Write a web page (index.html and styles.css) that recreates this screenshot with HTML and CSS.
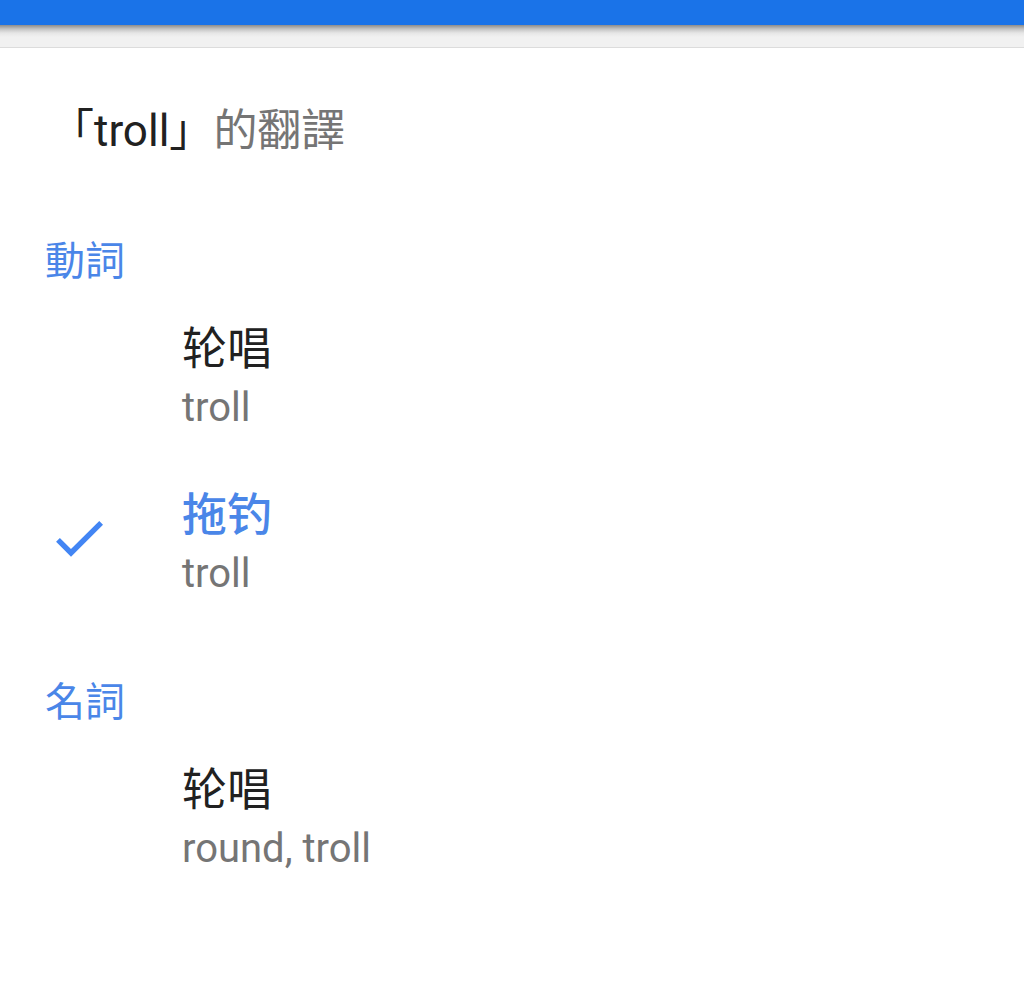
FILE: index.html
```html
<!DOCTYPE html>
<html lang="zh-TW">
<head>
<meta charset="utf-8">
<title>troll 的翻譯</title>
<link rel="stylesheet" href="styles.css">
</head>
<body>
<header class="toolbar"></header>
<div class="shade"></div>
<main class="sheet">
  <h1 class="title"><span class="term">「troll」</span>的翻譯</h1>
  <section class="group">
    <h2 class="pos">動詞</h2>
    <div class="item">
      <div class="mark"></div>
      <div class="texts">
        <div class="word" lang="zh-CN">轮唱</div>
        <div class="sub">troll</div>
      </div>
    </div>
    <div class="item selected">
      <div class="mark">
        <svg class="check" viewBox="0 0 24 24" width="64" height="64"><path d="M9 16.17L4.83 12l-1.42 1.41L9 19 21 7l-1.41-1.41z"/></svg>
      </div>
      <div class="texts">
        <div class="word" lang="zh-CN">拖钓</div>
        <div class="sub">troll</div>
      </div>
    </div>
  </section>
  <section class="group">
    <h2 class="pos">名詞</h2>
    <div class="item">
      <div class="mark"></div>
      <div class="texts">
        <div class="word" lang="zh-CN">轮唱</div>
        <div class="sub">round, troll</div>
      </div>
    </div>
  </section>
</main>
</body>
</html>
```

FILE: styles.css
```css
html, body {
  margin: 0;
  padding: 0;
  background: #ffffff;
}
body {
  width: 1024px;
  height: 992px;
  overflow: hidden;
  font-family: Roboto, "Noto Sans CJK TC", "Noto Sans CJK SC", sans-serif;
}
.toolbar {
  height: 25px;
  background: #1a73e8;
}
.shade {
  height: 22px;
  background: linear-gradient(#8c8c8c 0px, #c4c4c4 4px, #e6e6e6 8px, #f1f1f1 12px, #f1f1f1 22px);
  border-bottom: 1px solid #dcdcdc;
}
.sheet {
  padding: 55px 0 0 45px;
}
.title {
  margin: 0;
  font-weight: 400;
  font-size: 44px;
  line-height: 56px;
  height: 56px;
  color: #757575;
  padding-left: 5px;
}
.term {
  color: #212121;
}
.group {
  margin-top: 50px;
}
.title + .group {
  margin-top: 78px;
}
.pos {
  margin: 0 0 9px;
  font-weight: 400;
  font-size: 40px;
  line-height: 50px;
  color: #4a86e8;
}
.item {
  display: flex;
  padding: 25px 0;
}
.mark {
  width: 137px;
  flex: none;
}
.check {
  display: block;
  margin: 19px 0 0 2px;
  fill: #4285f4;
}
.texts {
  display: flex;
  flex-direction: column;
}
.word {
  font-size: 45px;
  line-height: 58px;
  color: #212121;
}
.selected .word {
  color: #4a86e8;
  font-weight: 500;
}
.sub {
  font-size: 40px;
  line-height: 58px;
  color: #757575;
}
```
